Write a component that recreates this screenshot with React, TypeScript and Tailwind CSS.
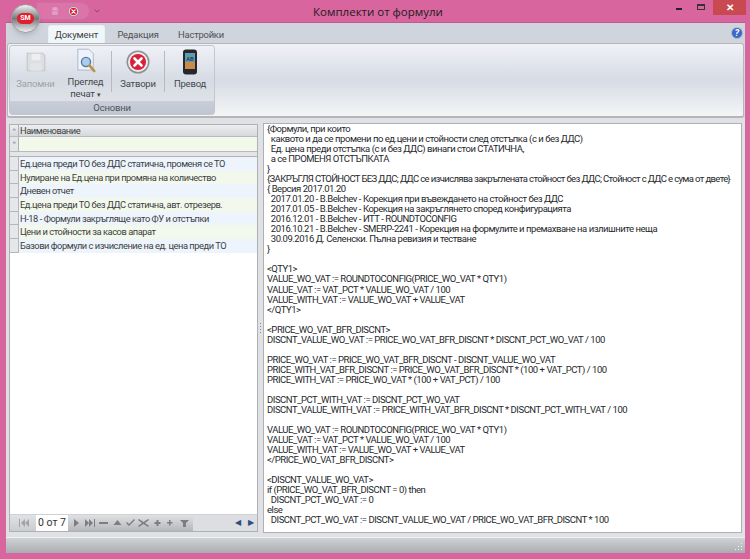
import { ChevronDown } from 'lucide-react';

const rows = [
  'Ед.цена преди ТО без ДДС статична, променя се ТО',
  'Нулиране на Ед.цена при промяна на количество',
  'Дневен отчет',
  'Ед.цена преди ТО без ДДС статична, авт. отрезерв.',
  'Н-18 - Формули закръгляще като ФУ и отстъпки',
  'Цени и стойности за касов апарат',
  'Базови формули с изчисление на ед. цена преди ТО',
];

const formulaHead = `{Формули, при които
  каквото и да се промени по ед.цени и стойности след отстъпка (с и без ДДС)
  Ед. цена преди отстъпка (с и без ДДС) винаги стои СТАТИЧНА,
  а се ПРОМЕНЯ ОТСТЪПКАТА
}
`;

const formulaLong = '{ЗАКРЪГЛЯ СТОЙНОСТ БЕЗ ДДС; ДДС се изчислява закръглената стойност без ДДС; Стойност с ДДС е сума от двете}';

const formulaTail = `
{ Версия 2017.01.20
  2017.01.20 - B.Belchev - Корекция при въвеждането на стойност без ДДС
  2017.01.05 - B.Belchev - Корекция на закръглянето според конфигурацията
  2016.12.01 - B.Belchev - ИТТ - ROUNDTOCONFIG
  2016.10.21 - B.Belchev - SMERP-2241 - Корекция на формулите и премахване на излишните неща
  30.09.2016 Д. Селенски. Пълна ревизия и тестване
}

<QTY1>
VALUE_WO_VAT := ROUNDTOCONFIG(PRICE_WO_VAT * QTY1)
VALUE_VAT := VAT_PCT * VALUE_WO_VAT / 100
VALUE_WITH_VAT := VALUE_WO_VAT + VALUE_VAT
</QTY1>

<PRICE_WO_VAT_BFR_DISCNT>
DISCNT_VALUE_WO_VAT := PRICE_WO_VAT_BFR_DISCNT * DISCNT_PCT_WO_VAT / 100

PRICE_WO_VAT := PRICE_WO_VAT_BFR_DISCNT - DISCNT_VALUE_WO_VAT
PRICE_WITH_VAT_BFR_DISCNT := PRICE_WO_VAT_BFR_DISCNT * (100 + VAT_PCT) / 100
PRICE_WITH_VAT := PRICE_WO_VAT * (100 + VAT_PCT) / 100

DISCNT_PCT_WITH_VAT := DISCNT_PCT_WO_VAT
DISCNT_VALUE_WITH_VAT := PRICE_WITH_VAT_BFR_DISCNT * DISCNT_PCT_WITH_VAT / 100

VALUE_WO_VAT := ROUNDTOCONFIG(PRICE_WO_VAT * QTY1)
VALUE_VAT := VAT_PCT * VALUE_WO_VAT / 100
VALUE_WITH_VAT := VALUE_WO_VAT + VALUE_VAT
</PRICE_WO_VAT_BFR_DISCNT>

<DISCNT_VALUE_WO_VAT>
if (PRICE_WO_VAT_BFR_DISCNT = 0) then
  DISCNT_PCT_WO_VAT := 0
else
  DISCNT_PCT_WO_VAT := DISCNT_VALUE_WO_VAT / PRICE_WO_VAT_BFR_DISCNT * 100`;

function CloseBadge({ size }: { size: number }) {
  return (
    <svg width={size} height={size} viewBox="0 0 24 24">
      <circle cx="12" cy="12" r="11.5" fill="#8f8f96" />
      <circle cx="12" cy="12" r="10" fill="#ececee" />
      <circle cx="12" cy="12" r="8" fill="#d8203a" />
      <path d="M8.5 8.5l7 7M15.5 8.5l-7 7" stroke="#fff" strokeWidth="2.6" strokeLinecap="round" />
    </svg>
  );
}

function Floppy({ size, color, line, faded }: { size: number; color: string; line: string; faded?: boolean }) {
  return (
    <svg width={size} height={size} viewBox="0 0 20 20" className={faded ? 'opacity-40' : ''}>
      <path d="M2 2h14l2 2v14H2z" fill={color} stroke={line} />
      <rect x="6" y="2.5" width="8" height="6" fill="#eceef0" />
      <rect x="5" y="11" width="10" height="7" fill="#e2e4e7" />
    </svg>
  );
}

function RibbonButton({ icon, label, w, muted }: { icon: React.ReactNode; label: React.ReactNode; w: string; muted?: boolean }) {
  return (
    <div className={`flex flex-col items-center shrink-0 ${w}`}>
      <div className="h-[28px] flex items-center justify-center">{icon}</div>
      <div className={`mt-[2px] text-center leading-[12px] text-[9.5px] tracking-[-0.2px] ${muted ? 'text-[#a0a2a6]' : 'text-[#46484c]'}`}>{label}</div>
    </div>
  );
}

function NavGlyph({ d }: { d: string }) {
  return (
    <svg width="13" height="10" viewBox="0 0 13 10" className="shrink-0">
      <path d={d} fill="#7c7e82" />
    </svg>
  );
}

export default function App() {
  return (
    <div className="relative w-[750px] h-[559px] overflow-hidden bg-[#d9659f] flex flex-col font-['Roboto',sans-serif]">
      {/* title bar */}
      <div className="h-[22px] shrink-0 flex">
        <div className="w-[90px] pl-[36px] shrink-0">
          <div className="h-[18px] mt-[2px] w-[54px] rounded-r-full border border-[#cc6f9f] bg-[#dc74aa] flex items-center gap-[8px] pl-[13px]">
            <Floppy size={10} color="#e4a3c4" line="#b9688f" faded />
            <CloseBadge size={11} />
          </div>
        </div>
        <ChevronDown size={8} className="mt-[7px] ml-[3px] text-[#444]" />
        <div className="flex-1 text-center text-[11.5px] leading-[24px] text-[#1c1c1c] font-['Open_Sans',sans-serif] pr-[7px]">Комплекти от формули</div>
        <div className="flex shrink-0 pr-[4px]">
          <div className="w-[33px] flex justify-center"><div className="w-[6px] h-[1.5px] mt-[8px] bg-[#222]" /></div>
          <div className="w-[13px] mr-[5px]"><div className="w-[8px] h-[6px] mt-[4px] ml-[2px] border border-[#333] border-t-2" /></div>
          <div className="w-[33px] h-[15px] bg-[#c8494f] flex items-center justify-center text-white text-[10px] font-bold leading-none">✕</div>
        </div>
      </div>

      {/* window client */}
      <div className="mr-[5px] ml-[6px] mb-[6px] flex-1 min-h-0 flex flex-col bg-[#d3d6dd] border-t border-[#bd5a8e]">
        <div className="h-[20px] shrink-0 flex items-end pl-[42px] pr-[2px] bg-[#d0d4dc]">
          <div className="w-[57px] h-[18px] rounded-t-[3px] border border-b-0 border-[#e6f3f5] bg-gradient-to-b from-[#f4f6f8] to-[#edf7f8] text-[9.6px] tracking-[-0.15px] leading-[17px] text-center text-[#3e4044]">Документ</div>
          <div className="w-[66px] text-center text-[9.4px] tracking-[-0.2px] leading-[17px] text-[#4e5054]">Редакция</div>
          <div className="w-[60px] text-center text-[9.4px] tracking-[-0.2px] leading-[17px] text-[#4e5054]">Настройки</div>
          <div className="ml-auto mb-[4px] w-[12px] h-[12px] rounded-full bg-[#3a68c8] border border-[#b8bcc6] text-white text-[9px] leading-[10px] font-bold italic text-center">?</div>
        </div>

        {/* ribbon */}
        <div className="h-[75px] shrink-0 mx-[1px] p-[1px] rounded-[3px] border border-[#b4b6ba] border-b-2 bg-gradient-to-b from-[#f0f2f7] via-[#d6dbe5] to-[#f4f5f6]">
          <div className="w-[206px] h-full overflow-hidden rounded-[3px] border border-[#c3c6cc] bg-gradient-to-b from-[#eff1f6] via-[#d6dbe4] to-[#e3e5e9] flex flex-col">
            <div className="flex-1 min-h-0 flex pt-[2px] pl-[1px]">
              <RibbonButton w="w-[49px]" muted label="Запомни" icon={<Floppy size={22} color="#dcdee2" line="#c4c6ca" />} />
              <RibbonButton
                w="w-[51px]"
                label={<>Преглед<br />печат <span className="text-[7px]">▾</span></>}
                icon={
                  <svg width="20" height="26" viewBox="0 0 22 28">
                    <path d="M2 1h12l5 5v18H2z" fill="#eef3fb" stroke="#a8b4c6" />
                    <circle cx="11" cy="15" r="5" fill="#a9cdf0" stroke="#5f7c9c" strokeWidth="1.6" />
                    <path d="M15 19l5 6" stroke="#b89440" strokeWidth="3" strokeLinecap="round" />
                  </svg>
                }
              />
              <div className="w-px h-[41px] mt-[3px] shrink-0 bg-[#b6b9bf]" />
              <RibbonButton w="w-[52px]" label="Затвори" icon={<CloseBadge size={24} />} />
              <div className="w-px h-[41px] mt-[3px] shrink-0 bg-[#b6b9bf]" />
              <RibbonButton
                w="w-[50px]"
                label="Превод"
                icon={
                  <svg width="16" height="26" viewBox="0 0 16 26">
                    <rect x="1" y="0.5" width="14" height="25" rx="3" fill="#26282c" />
                    <rect x="3" y="4" width="10" height="16" fill="#5f9cb4" />
                    <rect x="3" y="13" width="10" height="7" fill="#c98a4c" />
                    <text x="8" y="12" fontSize="6" textAnchor="middle" fill="#123" fontFamily="Roboto">AB</text>
                  </svg>
                }
              />
            </div>
            <div className="h-[13px] shrink-0 bg-gradient-to-b from-[#c9ced9] to-[#bfc5d2] text-center text-[9.5px] tracking-[-0.2px] leading-[13px] text-[#50535a]">Основни</div>
          </div>
        </div>

        {/* content */}
        <div className="flex-1 min-h-0 flex px-[3px] pt-[4px] pb-[4px] bg-[#dfe1e5]">
          {/* grid */}
          <div className="w-[249px] shrink-0 mt-[2px] mb-[1px] flex flex-col bg-white border border-[#aeb0b4] text-[9.3px] tracking-[-0.45px] text-[#3c3e42]">
            <div className="h-[12px] flex bg-gradient-to-b from-[#eceef0] to-[#d6d8dc] border-b border-[#b8babe]">
              <div className="w-[9px] border-r border-[#b0b2b6] text-[#99b] text-[8px] leading-[11px] text-center">*</div>
              <div className="pl-[1px] leading-[11px]">Наименование</div>
            </div>
            <div className="h-[15px] flex bg-[#f2f8ea] border-b border-[#b8babe]">
              <div className="w-[9px] bg-[#e4e6e8] border-r border-[#b0b2b6] text-[#99b] text-[8px] leading-[14px] text-center">*</div>
            </div>
            <div className="h-[5px] bg-[#e4e5e8] border-b border-[#b0b2b6]" />
            {rows.map((r, i) => (
              <div key={r} className={`h-[13.7px] flex ${i % 2 ? 'bg-[#f3f8ec]' : 'bg-[#edf4fc]'}`}>
                <div className="w-[9px] shrink-0 bg-[#e6e7ea] border-r border-b border-[#b4b6ba]" />
                <div className="pl-[1px] leading-[13px] whitespace-nowrap">{r}</div>
              </div>
            ))}
            <div className="flex-1" />
            <div className="h-[17px] flex items-center tracking-normal bg-[#dcdee2] border-t border-[#cfd1d5]">
              <div className="h-full w-[26px] flex items-center justify-center gap-[1px] bg-gradient-to-b from-[#e4e5e7] to-[#bfc1c4] opacity-60">
                <NavGlyph d="M2 1h1v8H2zM8 1v8L4 5zM12 1v8L8 5z" />
              </div>
              <div className="h-full w-[32px] bg-white text-[10.5px] leading-[16px] text-center text-[#333]">0 от 7</div>
              <div className="h-full w-[125px] flex items-center justify-around px-[2px] bg-gradient-to-b from-[#e0e1e3] to-[#b5b7ba]">
                <NavGlyph d="M4 1v8l5-4z" />
                <NavGlyph d="M1 1v8l4-4zM5 1v8l4-4zM10 1h1v8h-1z" />
                <NavGlyph d="M2 4h9v2H2z" />
                <NavGlyph d="M6.5 2l4 5h-8z" />
                <NavGlyph d="M2 5l3 3 6-6-1-1-5 5-2-2z" />
                <NavGlyph d="M2 1l4.500 3L11 1l1 1-4 3 4 3-1 1-4.500-3L2 9 1 8l4-3-4-3z" />
                <NavGlyph d="M5.500 2h2v2h2v2h-2v2h-2V6h-2V4h2z" />
                <NavGlyph d="M5 2h1.500v2H8.500v1.500H6.500v2H5v-2H3V4h2z" />
                <NavGlyph d="M2 2h9L8 5v4H5V5z" />
              </div>
              <div className="flex-1 flex justify-end gap-[7px] pr-[3px] text-[#2c4f80] text-[8px]">
                <span>◀</span>
                <span>▶</span>
              </div>
            </div>
          </div>

          {/* splitter */}
          <div className="w-[5px] shrink-0 flex flex-col items-center justify-center gap-[2px]">
            <div className="w-px h-px bg-[#8c8e92]" />
            <div className="w-px h-px bg-[#8c8e92]" />
            <div className="w-px h-px bg-[#8c8e92]" />
            <div className="w-px h-px bg-[#8c8e92]" />
          </div>

          {/* formula text */}
          <div className="flex-1 min-w-0 mt-[1px] border border-[#aeb0b4] bg-white pl-[3px] overflow-hidden">
            <pre className="font-['Roboto',sans-serif] text-[9.5px] tracking-[-0.47px] leading-[10.03px] text-[#26282c] whitespace-pre">
              {formulaHead}
              <span className="tracking-[-0.63px]">{formulaLong}</span>
              {formulaTail}
            </pre>
          </div>
        </div>

        {/* status bar */}
        <div className="h-[16px] shrink-0 bg-gradient-to-b from-[#d0d3d5] to-[#a9adb2] border-t border-[#eef0f2] flex justify-end items-end pr-[2px] pb-[2px]">
          <svg width="9" height="9" viewBox="0 0 9 9">
            <path d="M7 1h1v1H7zM4 4h1v1H4zM7 4h1v1H7zM1 7h1v1H1zM4 7h1v1H4zM7 7h1v1H7z" fill="#f2f3f4" />
          </svg>
        </div>
      </div>

      {/* app button */}
      <div className="absolute left-[11px] top-[4px] w-[29px] h-[29px] rounded-full border border-[#9a9a9e] bg-gradient-to-b from-[#f4f4f5] via-[#77797d] to-[#f0f0f2] flex items-center justify-center shadow-md">
        <div className="w-[17px] h-[11px] rounded-full bg-[#e0202c] text-white text-[7px] leading-[11px] text-center font-bold">SM</div>
      </div>
    </div>
  );
}
